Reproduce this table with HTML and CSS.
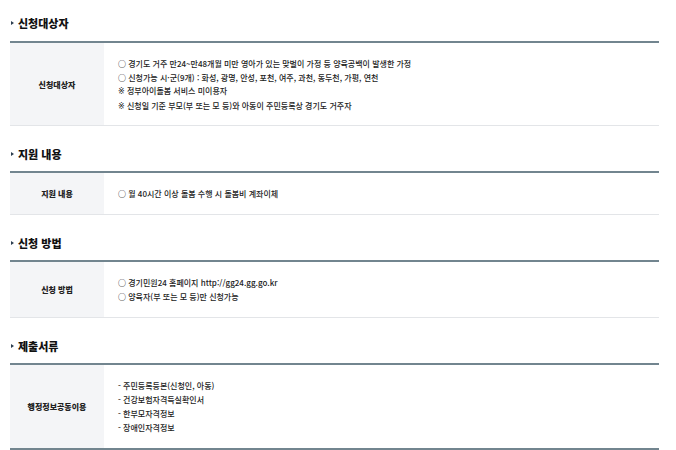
FILE: index.html
```html
<!DOCTYPE html>
<html lang="ko">
<head>
<meta charset="utf-8">
<link rel="stylesheet" href="styles.css">
</head>
<body>
<div class="page">
  <section class="sec first">
    <h3 class="title"><span class="tri"></span>신청대상자</h3>
    <div class="tbl">
      <div class="lab">신청대상자</div>
      <div class="cont">
        <p>○ 경기도 거주 만24~만48개월 미만 영아가 있는 맞벌이 가정 등 양육공백이 발생한 가정</p>
        <p>○ 신청가능 시·군(9개) : 화성, 광명, 안성, 포천, 여주, 과천, 동두천, 가평, 연천</p>
        <p><span class="mark">※</span> 정부아이돌봄 서비스 미이용자</p>
        <p><span class="mark">※</span> 신청일 기준 부모(부 또는 모 등)와 아동이 주민등록상 경기도 거주자</p>
      </div>
    </div>
  </section>
  <section class="sec">
    <h3 class="title"><span class="tri"></span>지원 내용</h3>
    <div class="tbl">
      <div class="lab">지원 내용</div>
      <div class="cont">
        <p>○ 월 40시간 이상 돌봄 수행 시 돌봄비 계좌이체</p>
      </div>
    </div>
  </section>
  <section class="sec">
    <h3 class="title"><span class="tri"></span>신청 방법</h3>
    <div class="tbl">
      <div class="lab">신청 방법</div>
      <div class="cont wide">
        <p>○ 경기민원24 홈페이지 http://gg24.gg.go.kr</p>
        <p>○ 양육자(부 또는 모 등)만 신청가능</p>
      </div>
    </div>
  </section>
  <section class="sec">
    <h3 class="title"><span class="tri"></span>제출서류</h3>
    <div class="tbl last">
      <div class="lab">행정정보공동이용</div>
      <div class="cont wide">
        <p>- 주민등록등본(신청인, 아동)</p>
        <p>- 건강보험자격득실확인서</p>
        <p>- 한부모자격정보</p>
        <p>- 장애인자격정보</p>
      </div>
    </div>
  </section>
</div>
</body>
</html>
```

FILE: styles.css
```css
html, body {
  margin: 0;
  padding: 0;
  background: #ffffff;
}
body {
  font-family: "Noto Sans CJK KR", "Noto Sans", sans-serif;
  color: #333;
}
.page {
  width: 649px;
  margin-left: 10px;
}
.sec .title {
  margin: 19px 0 8px;
  height: 18px;
  line-height: 18px;
  font-size: 11px;
  font-weight: 900;
  color: #111;
  display: flex;
  align-items: center;
  gap: 4px;
}
.sec.first .title {
  margin-top: 14px;
  margin-bottom: 9px;
}
.tri {
  width: 0;
  height: 0;
  border-top: 2.5px solid transparent;
  border-bottom: 2.5px solid transparent;
  border-left: 3px solid #2c3e50;
  margin-left: 1px;
}
.tbl {
  display: grid;
  grid-template-columns: 94px 1fr;
  border-top: 2px solid #72858f;
  border-bottom: 1px solid #e3e5e8;
}
.tbl.last {
  border-bottom: 2px solid #72858f;
}
.lab {
  background: #f4f5f7;
  display: flex;
  align-items: center;
  justify-content: center;
  font-size: 8px;
  font-weight: 900;
  color: #222;
}
.cont {
  padding: 14px 14px 13px;
  font-size: 8px;
  font-weight: 500;
  line-height: 13.5px;
  color: #222;
}
.sec.first .cont {
  padding-bottom: 12px;
}
.cont.wide {
  line-height: 14px;
}
.cont p {
  margin: 0;
}
.mark {
  font-family: "DejaVu Sans", sans-serif;
  font-variant-emoji: text;
  color: #222;
}
```
